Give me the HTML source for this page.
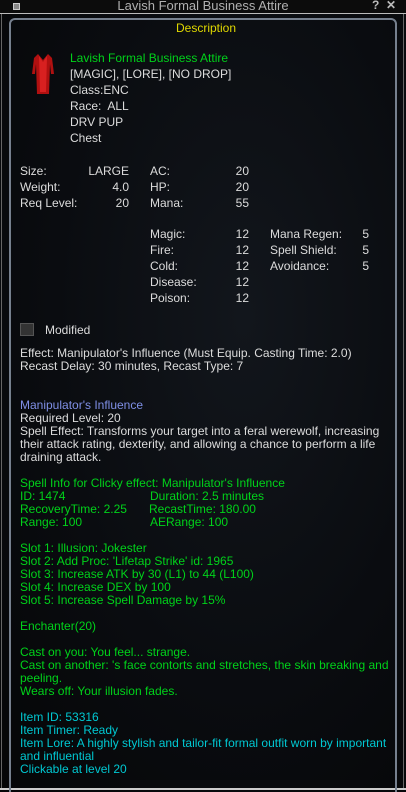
<!DOCTYPE html>
<html><head><meta charset="utf-8"><style>
html,body{margin:0;padding:0;width:406px;height:792px;overflow:hidden;background:#07090c;}
body{position:relative;font-family:"Liberation Sans",Arial,sans-serif;font-size:12px;color:#dcdcdc;}
.t{position:absolute;white-space:nowrap;line-height:13px;}
.g{color:#00d21a}.c{color:#00c8d2}.p{color:#7f8fe6}.w{color:#dcdcdc}
.r{text-align:right}
</style></head><body>
<div style="position:absolute;left:0;top:0;width:406px;height:792px;background:radial-gradient(ellipse at 60% 40%,#12161c 0%,#0a0c10 55%,#050607 100%);"></div>
<!-- title bar -->
<div style="position:absolute;left:0;top:0;width:406px;height:13px;background:#0c0c0c;border-bottom:1px solid #bbb;"></div>
<div style="position:absolute;left:13px;top:3px;width:5px;height:5px;border:1px solid #ccc;background:#888"></div>
<div class="t" style="left:0;width:406px;text-align:center;top:-1px;font-size:13px;color:#b0b0b0">Lavish Formal Business Attire</div>
<div class="t" style="left:372px;top:-1px;font-size:12px;color:#bbb;font-weight:bold">?&nbsp;&nbsp;✕</div>
<!-- frame -->
<div style="position:absolute;left:1px;top:14px;width:1px;height:775px;background:#666"></div>
<div style="position:absolute;left:403px;top:14px;width:1px;height:775px;background:#666"></div>
<div style="position:absolute;left:0;top:788px;width:406px;height:2px;background:#ccc"></div>
<div style="position:absolute;left:9px;top:18px;width:384px;height:780px;border:2px solid #76808e;border-radius:6px;"></div>
<div class="t" style="left:0;width:412px;text-align:center;top:22px;color:#e0d800">Description</div>
<!-- robe icon -->
<svg style="position:absolute;left:30px;top:52px" width="26" height="46" viewBox="0 0 26 46">
<path d="M8 2 L4 6 L2 22 L5 22 L6 12 L7 42 L19 42 L20 12 L21 22 L24 22 L22 6 L18 2 L13 8 Z" fill="#b01010"/>
<path d="M9 4 L13 10 L17 4 L16 40 L10 40 Z" fill="#d82020"/>
</svg>
<div class="t g" style="left:70px;top:52px">Lavish Formal Business Attire</div>
<div class="t" style="left:70px;top:68px">[MAGIC], [LORE], [NO DROP]</div>
<div class="t" style="left:70px;top:84px">Class:ENC</div>
<div class="t" style="left:70px;top:100px">Race:&nbsp; ALL</div>
<div class="t" style="left:70px;top:116px">DRV PUP</div>
<div class="t" style="left:70px;top:132px">Chest</div>

<div class="t" style="left:20px;top:165px">Size:</div><div class="t r" style="left:60px;width:69px;top:165px">LARGE</div>
<div class="t" style="left:20px;top:181px">Weight:</div><div class="t r" style="left:60px;width:69px;top:181px">4.0</div>
<div class="t" style="left:20px;top:197px">Req Level:</div><div class="t r" style="left:60px;width:69px;top:197px">20</div>
<div class="t" style="left:150px;top:165px">AC:</div><div class="t r" style="left:200px;width:49px;top:165px">20</div>
<div class="t" style="left:150px;top:181px">HP:</div><div class="t r" style="left:200px;width:49px;top:181px">20</div>
<div class="t" style="left:150px;top:197px">Mana:</div><div class="t r" style="left:200px;width:49px;top:197px">55</div>

<div class="t" style="left:150px;top:228px">Magic:</div><div class="t r" style="left:200px;width:49px;top:228px">12</div>
<div class="t" style="left:150px;top:244px">Fire:</div><div class="t r" style="left:200px;width:49px;top:244px">12</div>
<div class="t" style="left:150px;top:260px">Cold:</div><div class="t r" style="left:200px;width:49px;top:260px">12</div>
<div class="t" style="left:150px;top:276px">Disease:</div><div class="t r" style="left:200px;width:49px;top:276px">12</div>
<div class="t" style="left:150px;top:292px">Poison:</div><div class="t r" style="left:200px;width:49px;top:292px">12</div>
<div class="t" style="left:270px;top:228px">Mana Regen:</div><div class="t r" style="left:340px;width:29px;top:228px">5</div>
<div class="t" style="left:270px;top:244px">Spell Shield:</div><div class="t r" style="left:340px;width:29px;top:244px">5</div>
<div class="t" style="left:270px;top:260px">Avoidance:</div><div class="t r" style="left:340px;width:29px;top:260px">5</div>

<div style="position:absolute;left:20px;top:323px;width:14px;height:13px;background:#333;border:1px solid #555;box-sizing:border-box"></div>
<div class="t" style="left:45px;top:324px">Modified</div>

<div class="t" style="left:20px;top:347px">Effect: Manipulator's Influence (Must Equip. Casting Time: 2.0)</div>
<div class="t" style="left:20px;top:360px">Recast Delay: 30 minutes, Recast Type: 7</div>

<div class="t p" style="left:20px;top:399px">Manipulator's Influence</div>
<div class="t" style="left:20px;top:412px">Required Level: 20</div>
<div class="t" style="left:20px;top:425px">Spell Effect: Transforms your target into a feral werewolf, increasing</div>
<div class="t" style="left:20px;top:438px">their attack rating, dexterity, and allowing a chance to perform a life</div>
<div class="t" style="left:20px;top:451px">draining attack.</div>

<div class="t g" style="left:20px;top:477px">Spell Info for Clicky effect: Manipulator's Influence</div>
<div class="t g" style="left:20px;top:490px">ID: 1474</div><div class="t g" style="left:150px;top:490px">Duration: 2.5 minutes</div>
<div class="t g" style="left:20px;top:503px">RecoveryTime: 2.25</div><div class="t g" style="left:149px;top:503px">RecastTime: 180.00</div>
<div class="t g" style="left:20px;top:516px">Range: 100</div><div class="t g" style="left:150px;top:516px">AERange: 100</div>

<div class="t g" style="left:20px;top:542px">Slot 1: Illusion: Jokester</div>
<div class="t g" style="left:20px;top:555px">Slot 2: Add Proc: 'Lifetap Strike' id: 1965</div>
<div class="t g" style="left:20px;top:568px">Slot 3: Increase ATK by 30 (L1) to 44 (L100)</div>
<div class="t g" style="left:20px;top:581px">Slot 4: Increase DEX by 100</div>
<div class="t g" style="left:20px;top:594px">Slot 5: Increase Spell Damage by 15%</div>
<div class="t g" style="left:20px;top:620px">Enchanter(20)</div>
<div class="t g" style="left:20px;top:646px">Cast on you: You feel... strange.</div>
<div class="t g" style="left:20px;top:659px">Cast on another: 's face contorts and stretches, the skin breaking and</div>
<div class="t g" style="left:20px;top:672px">peeling.</div>
<div class="t g" style="left:20px;top:685px">Wears off: Your illusion fades.</div>

<div class="t c" style="left:20px;top:711px">Item ID: 53316</div>
<div class="t c" style="left:20px;top:724px">Item Timer: Ready</div>
<div class="t c" style="left:20px;top:737px">Item Lore: A highly stylish and tailor-fit formal outfit worn by important</div>
<div class="t c" style="left:20px;top:750px">and influential</div>
<div class="t c" style="left:20px;top:763px">Clickable at level 20</div>
</body></html>
